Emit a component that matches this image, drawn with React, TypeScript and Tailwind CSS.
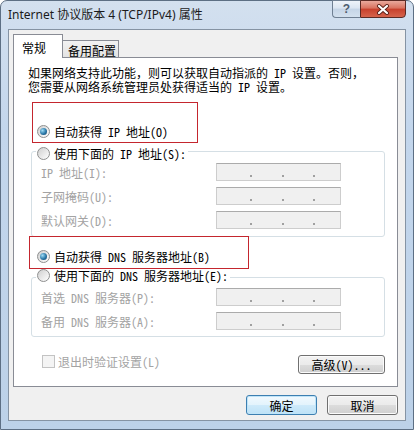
import React from "react";

const FONT = "font-[family-name:'Noto_Sans_Mono_CJK_SC','Noto_Sans_CJK_SC',sans-serif]";

function Radio({ checked }: { checked?: boolean }) {
  return (
    <span className="flex w-[13px] h-[13px] shrink-0 rounded-full border border-[#8e8f8f] bg-[linear-gradient(135deg,#cfcfcf,#ffffff)] items-center justify-center">
      {checked && (
        <span className="w-[7px] h-[7px] rounded-full bg-[radial-gradient(circle_at_35%_35%,#9fdcf5,#2a78a8_55%,#0d3a5e)]" />
      )}
    </span>
  );
}

function IpField() {
  return (
    <div className="w-[125px] h-[18px] border border-[#cdcdcd] border-t-[#ababab] bg-[#f0f0f0] flex items-center">
      <span className="ml-[33px] mt-[7px] w-[2px] h-[2px] bg-[#a0a0a0]" />
      <span className="ml-[30px] mt-[7px] w-[2px] h-[2px] bg-[#a0a0a0]" />
      <span className="ml-[29px] mt-[7px] w-[2px] h-[2px] bg-[#a0a0a0]" />
    </div>
  );
}

function FieldRow({ label }: { label: string }) {
  return (
    <div className="flex items-center h-[18px] pl-[9px]">
      <span className="w-[175px] text-[#a3a3a3] whitespace-nowrap">{label}</span>
      <IpField />
    </div>
  );
}

function Btn({ children, def, className }: { children: React.ReactNode; def?: boolean; className: string }) {
  return (
    <div
      className={
        "flex items-center justify-center rounded-[3px] border text-black " +
        (def
          ? "border-[#3c7fb1] bg-[linear-gradient(180deg,#f1f9fe_0%,#e3f3fc_50%,#cfeafa_50%,#bde2f7_100%)] shadow-[inset_0_0_0_1px_#bfe4f8] "
          : "border-[#707070] bg-[linear-gradient(180deg,#f2f2f2_0%,#ebebeb_50%,#dddddd_50%,#cfcfcf_100%)] shadow-[inset_0_0_0_1px_#fbfbfb] ") +
        className
      }
    >
      {children}
    </div>
  );
}

export default function App() {
  return (
    <div className="w-[414px] h-[430px] bg-white overflow-hidden">
      <div className="w-[414px] h-[430px] rounded-t-[7px] border border-[#5d6f84] bg-[linear-gradient(180deg,#d3e0ef_0%,#c3d6ec_30%,#bcd1e8_100%)] px-[7px] flex flex-col">
        {/* title bar */}
        <div className="h-[28px] flex items-start">
          <span className="mt-[5px] leading-[18px] text-[12px] text-[#1b1b1b] whitespace-nowrap font-[family-name:'Noto_Sans','Noto_Sans_CJK_SC',sans-serif]">
            Internet 协议版本 4 (TCP/IPv4) 属性
          </span>
          <div className="ml-auto flex -mt-[1px]">
            <div className="w-[28px] h-[18px] rounded-bl-[4px] border border-[#6f7f92] border-r-0 bg-[linear-gradient(180deg,#eef3f9_0%,#dbe5f1_45%,#c5d4e6_50%,#d3e0ee_100%)] flex items-center justify-center text-[12px] font-bold text-[#4e5d6e] font-[family-name:'Liberation_Sans',sans-serif]">
              ?
            </div>
            <div className="w-[46px] h-[18px] rounded-br-[4px] border border-[#5b2a24] bg-[linear-gradient(180deg,#e9a99c_0%,#d9725f_45%,#c7402c_50%,#d6644c_100%)] flex items-center justify-center">
              <svg width="14" height="11" viewBox="0 0 14 11">
                <path d="M3 2 L11 9 M11 2 L3 9" stroke="#5a2018" strokeWidth="4" strokeLinecap="round" />
                <path d="M3 2 L11 9 M11 2 L3 9" stroke="#ffffff" strokeWidth="2.2" strokeLinecap="round" />
              </svg>
            </div>
          </div>
        </div>

        {/* client */}
        <div className={"w-[398px] h-[392px] border border-[#8593a3] bg-[#f0f0f0] flex flex-col text-[12px] leading-[13px] text-black " + FONT}>
          {/* tabs */}
          <div className="h-[27px] flex items-end pl-[4px]">
            <div className="relative z-10 w-[50px] h-[24px] -mb-[1px] border border-b-0 border-[#898c95] bg-white pl-[8px] pt-[6px]">
              常规
            </div>
            <div className="w-[56px] h-[17px] border border-b-0 border-l-0 border-[#898c95] bg-[linear-gradient(180deg,#f2f2f2,#e3e3e3)] pl-[5px] pt-[3px] whitespace-nowrap">
              备用配置
            </div>
          </div>

          {/* panel */}
          <div className="relative ml-[4px] w-[385px] border border-[#898c95] bg-white pt-[8px] pb-[12px]">
            <div className="pl-[14px] whitespace-nowrap flex flex-col">
              <div className="h-[14px] leading-[14px]">如果网络支持此功能，则可以获取自动指派的 IP 设置。否则，</div>
              <div className="h-[14px] leading-[14px]">您需要从网络系统管理员处获得适当的 IP 设置。</div>
            </div>

            <div className="mt-[29px] ml-[23px] flex items-center h-[16px] gap-[4px]">
              <Radio checked />
              <span className="whitespace-nowrap">自动获得 IP 地址(O)</span>
            </div>

            <div className="mt-[12px] ml-[17px] w-[354px] border border-[#d5dfe5] rounded-[3px] pb-[7px]">
              <div className="-mt-[7px] ml-[4px] h-[16px] flex">
                <div className="flex items-center gap-[4px] bg-white pl-[1px] pr-[2px]">
                  <Radio />
                  <span className="whitespace-nowrap">使用下面的 IP 地址(S):</span>
                </div>
              </div>
              <div className="mt-[2px] flex flex-col gap-[6px]">
                <FieldRow label="IP 地址(I):" />
                <FieldRow label="子网掩码(U):" />
                <FieldRow label="默认网关(D):" />
              </div>
            </div>

            <div className="mt-[11px] ml-[23px] flex items-center h-[16px] gap-[4px]">
              <Radio checked />
              <span className="whitespace-nowrap">自动获得 DNS 服务器地址(B)</span>
            </div>

            <div className="mt-[13px] ml-[17px] w-[354px] border border-[#d5dfe5] rounded-[3px] pb-[6px]">
              <div className="-mt-[11px] ml-[4px] h-[16px] flex">
                <div className="flex items-center gap-[4px] bg-white pl-[1px] pr-[2px]">
                  <Radio />
                  <span className="whitespace-nowrap">使用下面的 DNS 服务器地址(E):</span>
                </div>
              </div>
              <div className="mt-[5px] flex flex-col gap-[6px]">
                <FieldRow label="首选 DNS 服务器(P):" />
                <FieldRow label="备用 DNS 服务器(A):" />
              </div>
            </div>

            <div className="mt-[18px] flex items-start justify-between pl-[28px] pr-[12px]">
              <div className="flex items-center gap-[3px] h-[13px]">
                <span className="w-[13px] h-[13px] border border-[#c3c3c3] bg-[#f4f4f4]" />
                <span className="text-[#a3a3a3] whitespace-nowrap">退出时验证设置(L)</span>
              </div>
              <Btn className="w-[87px] h-[19px] whitespace-nowrap">高级(V)...</Btn>
            </div>

            {/* annotation boxes */}
            <div className="absolute left-[18px] top-[44px] w-[166px] h-[41px] border border-[#c4262e] pointer-events-none" />
            <div className="absolute left-[15px] top-[178px] w-[220px] h-[33px] border border-[#c4262e] pointer-events-none" />
          </div>

          {/* bottom buttons */}
          <div className="mt-[8px] flex justify-end gap-[10px] pr-[7px]">
            <Btn def className="w-[71px] h-[20px]">确定</Btn>
            <Btn className="w-[71px] h-[20px]">取消</Btn>
          </div>
        </div>
      </div>
    </div>
  );
}
